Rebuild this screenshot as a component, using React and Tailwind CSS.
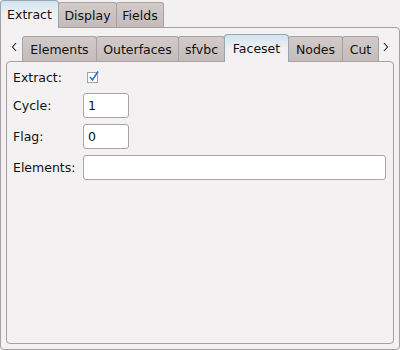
import React from "react";

const font = { fontFamily: '"DejaVu Sans", sans-serif' };

function Tab({ label, active, first, w }) {
  if (active) {
    return (
      <div
        className={
          "relative z-10 -mb-px flex h-[28px] shrink-0 items-center justify-center rounded-t-[4px] border border-b-0 border-[#9aa6b0] bg-gradient-to-b from-[#cfe4f2] via-[#f1f0f0] to-[#f3f1f1] text-[#111] " +
          w
        }
      >
        {label}
      </div>
    );
  }
  return (
    <div
      className={
        "flex h-[25px] shrink-0 items-center justify-center self-end rounded-t-[3px] border border-b-0 border-[#aaa2a2] bg-gradient-to-b from-[#d2cbca] to-[#c4bcbb] text-[#111] " +
        (first ? "" : "-ml-px ") +
        w
      }
    >
      {label}
    </div>
  );
}

function Field({ label, children }) {
  return (
    <div className="flex items-center">
      <div className="w-[70px]">{label}</div>
      {children}
    </div>
  );
}

function Input({ value, className }) {
  return (
    <div
      className={
        "flex h-[25px] items-center rounded-[3px] border border-[#aaa3a3] bg-white px-[4px] " +
        className
      }
    >
      {value}
    </div>
  );
}

function Chevron({ dir }) {
  return (
    <svg viewBox="0 0 6 10" className="h-[10px] w-[6px]">
      <path
        d={dir === "left" ? "M5 1 L1.5 5 L5 9" : "M1 1 L4.5 5 L1 9"}
        fill="none"
        stroke="#222"
        strokeWidth="1.1"
      />
    </svg>
  );
}

export default function App() {
  return (
    <div
      className="h-[350px] w-[400px] overflow-hidden bg-[#f2f0f0] text-[12.5px] leading-[15px] text-[#111]"
      style={font}
    >
      {/* outer tab bar */}
      <div className="flex h-[27px] items-end">
        <Tab label="Extract" active first w="w-[59px]" />
        <div className="-ml-px flex">
          <Tab label="Display" first w="w-[59px]" />
          <Tab label="Fields" w="w-[48px]" />
        </div>
      </div>

      <div className="h-[323px] rounded-b-[4px] rounded-tr-[4px] border border-[#a6a0a0] bg-[#f3f1f1] px-[5px] pt-[5px] pb-[5px]">
        {/* inner tab bar */}
        <div className="flex h-[28px] items-end">
          <div className="flex h-[22px] w-[16px] shrink-0 items-center justify-center self-center">
            <Chevron dir="left" />
          </div>
          <Tab label="Elements" first w="w-[75px]" />
          <Tab label="Outerfaces" w="w-[83px]" />
          <Tab label="sfvbc" w="w-[47px]" />
          <div className="-ml-px">
            <Tab label="Faceset" active w="w-[65px]" />
          </div>
          <div className="-ml-px flex">
            <Tab label="Nodes" first w="w-[55px]" />
            <Tab label="Cut" w="w-[37px]" />
          </div>
          <div className="flex h-[22px] w-[10px] shrink-0 items-center justify-end self-center">
            <Chevron dir="right" />
          </div>
        </div>

        <div className="flex h-[283px] flex-col gap-[6px] rounded-[4px] border border-[#a6a0a0] bg-[#f3f1f1] px-[6px] pt-[6px]">
          <Field label="Extract:">
            <div className="flex h-[19px] items-center">
              <div className="relative ml-[4px] h-[11px] w-[11px] border border-[#9ea4ac] bg-white">
                <svg
                  viewBox="0 0 12 12"
                  className="absolute -top-[3px] left-[0px] h-[13px] w-[12px]"
                >
                  <path
                    d="M2 6.5 L4.5 9.5 L10 1"
                    fill="none"
                    stroke="#2f6fd1"
                    strokeWidth="1.6"
                  />
                </svg>
              </div>
            </div>
          </Field>
          <Field label="Cycle:">
            <Input value="1" className="w-[46px]" />
          </Field>
          <Field label="Flag:">
            <Input value="0" className="w-[46px]" />
          </Field>
          <Field label="Elements:">
            <Input value="" className="w-[303px]" />
          </Field>
        </div>
      </div>
    </div>
  );
}
